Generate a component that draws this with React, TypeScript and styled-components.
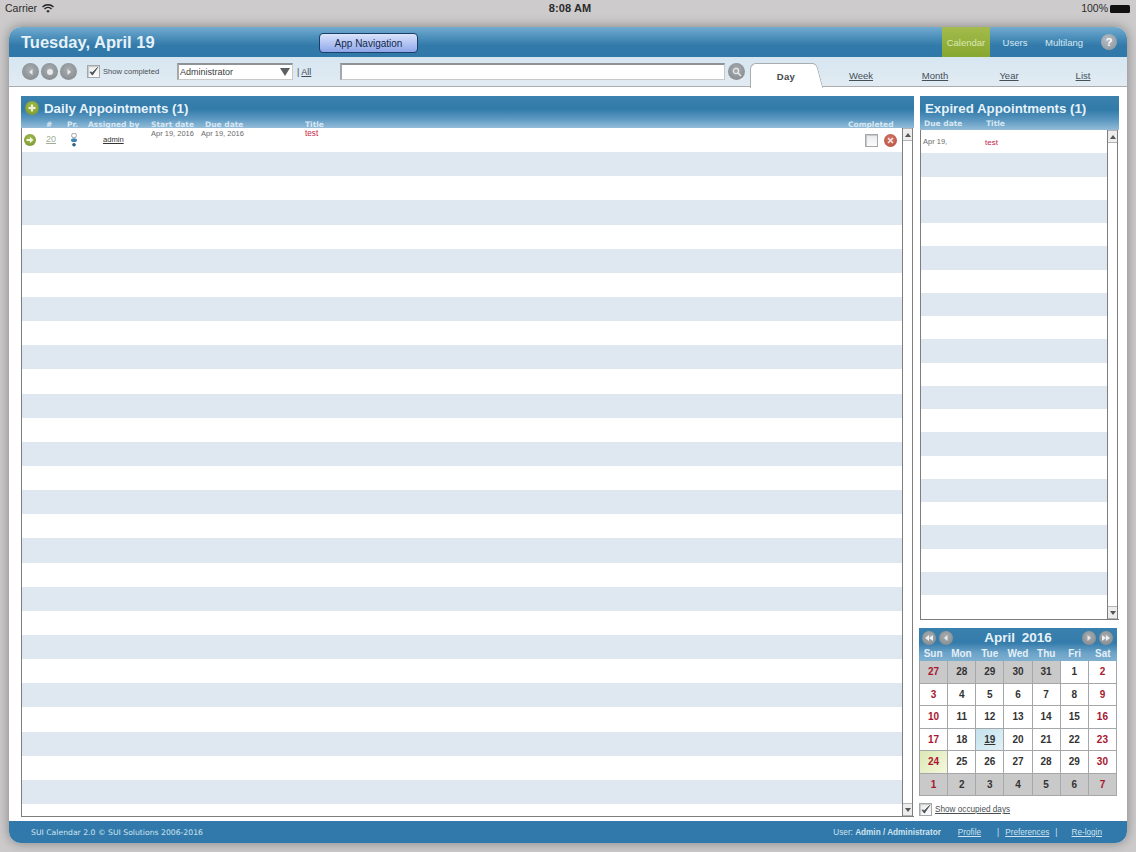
import React from "react";
import styled, { createGlobalStyle } from "styled-components";

const GlobalStyle = createGlobalStyle`
  html, body {
    margin: 0;
    padding: 0;
    background-color: #cdcbcb;
    font-family: "Liberation Sans", Arial, sans-serif;
  }
`;

const Page = styled.div`
  width: 1136px;
  height: 852px;
  overflow: hidden;
  display: flex;
  flex-direction: column;
  background-color: #cdcbcb;
`;

const StatusBar = styled.div`
  height: 27px;
  flex: none;
  padding: 0 5px;
  display: grid;
  grid-template-columns: 1fr 1fr 1fr;
  align-items: start;
  font-size: 10.5px;
  line-height: 17px;
  color: #2a2a2a;
`;

const StatusLeft = styled.div`
  display: flex;
  align-items: center;
  gap: 5px;
`;

const StatusTime = styled.div`
  text-align: center;
  font-size: 11px;
  font-weight: bold;
  letter-spacing: 0.1px;
  padding-left: 4px;
`;

const StatusRight = styled.div`
  display: flex;
  justify-content: flex-end;
  align-items: center;
  gap: 2px;
`;

const Battery = styled.div`
  width: 20px;
  height: 8px;
  background-color: #111;
  border-radius: 1.5px;
  margin-right: 1px;
`;

const AppWindow = styled.div`
  width: 1118px;
  height: 816px;
  margin-left: 9px;
  flex: none;
  display: flex;
  flex-direction: column;
  border-radius: 12px;
  background-color: #fff;
  overflow: hidden;
  box-shadow: 0 0 12px rgba(70, 70, 70, 0.55);
`;

const Header = styled.div`
  height: 30px;
  flex: none;
  display: flex;
  align-items: stretch;
  background: linear-gradient(#72abd0 0%, #4c8fbb 35%, #327aaa 62%, #2f78a9 100%);
`;

const DateTitle = styled.div`
  width: 298px;
  flex: none;
  box-sizing: border-box;
  padding-left: 12px;
  font-size: 16.5px;
  font-weight: bold;
  line-height: 31px;
  color: #e6f2f9;
`;

const NavButton = styled.button`
  width: 99px;
  height: 20px;
  margin: 6px 0 0 12px;
  padding: 0;
  border: 1px solid #1b3f66;
  border-radius: 4px;
  background: linear-gradient(#dbe3fb, #8ea6ea);
  font-family: inherit;
  font-size: 10px;
  color: #122a4a;
`;

const TopNav = styled.div`
  margin-left: auto;
  display: flex;
  align-items: stretch;
`;

const TopNavItem = styled.div<{ $active?: boolean; $width: number }>`
  width: ${(p) => p.$width}px;
  text-align: center;
  font-size: 9.5px;
  line-height: 32px;
  color: ${(p) => (p.$active ? "#dbe9b4" : "#d7e8f3")};
  background: ${(p) => (p.$active ? "linear-gradient(#a3bb4c, #87a72f)" : "none")};
`;

const HelpButton = styled.div`
  width: 16px;
  height: 16px;
  margin: 7px 10px 0 13px;
  border-radius: 50%;
  background: radial-gradient(circle at 40% 35%, #b5bdc4, #87929b);
  color: #fff;
  font-size: 11px;
  font-weight: bold;
  line-height: 16px;
  text-align: center;
`;

const Toolbar = styled.div`
  height: 30px;
  flex: none;
  display: flex;
  align-items: flex-start;
  background: linear-gradient(#d6e6f1, #e2ebf2);
  border-bottom: 1px solid #a9adb0;
  box-sizing: border-box;
`;

const ToolGroup = styled.div<{ $pad?: number; $gap?: number; $width?: number }>`
  display: flex;
  align-items: center;
  height: 29px;
  padding-left: ${(p) => p.$pad ?? 0}px;
  gap: ${(p) => p.$gap ?? 0}px;
  ${(p) => (p.$width ? `width: ${p.$width}px;` : "")}
`;

const RoundButton = styled.div<{ $size?: number; $tone?: string }>`
  width: ${(p) => p.$size ?? 17}px;
  height: ${(p) => p.$size ?? 17}px;
  flex: none;
  border-radius: 50%;
  background: ${(p) => p.$tone ?? "radial-gradient(circle at 50% 40%, #a9aeb2, #7e8488)"};
  display: flex;
  align-items: center;
  justify-content: center;
`;

const CheckFrame = styled.div<{ $size?: number }>`
  width: ${(p) => p.$size ?? 13}px;
  height: ${(p) => p.$size ?? 13}px;
  flex: none;
  box-sizing: border-box;
  border: 1px solid #a4a8ab;
  box-shadow: inset 1px 1px 1px #c4c6c8;
  background: linear-gradient(#ececec, #fbfbfb);
  display: flex;
  align-items: center;
  justify-content: center;
`;

const ToolLabel = styled.span`
  margin-left: 3px;
  font-size: 7.6px;
  color: #4a4f53;
  white-space: nowrap;
`;

const TextField = styled.div<{ $width: number }>`
  width: ${(p) => p.$width}px;
  height: 17px;
  flex: none;
  box-sizing: border-box;
  border: 1px solid #c8c8c8;
  border-top: 2px solid #8f9396;
  border-left: 2px solid #a5a8aa;
  background-color: #fff;
  display: flex;
  align-items: center;
  justify-content: space-between;
  padding: 0 2px 0 1px;
  font-size: 9px;
  color: #3c3c3c;
`;

const Caret = styled.div`
  width: 0;
  height: 0;
  border-left: 5px solid transparent;
  border-right: 5px solid transparent;
  border-top: 8px solid #5c6063;
`;

const AllLink = styled.span`
  margin-left: 4px;
  width: 43px;
  flex: none;
  font-size: 9px;
  color: #3f4c56;
  & > u {
    margin-left: 2px;
  }
`;

const Tabs = styled.div`
  margin-left: auto;
  width: 377px;
  height: 30px;
  flex: none;
  display: flex;
  align-items: flex-end;
`;

const ActiveTab = styled.div`
  width: 66px;
  height: 25px;
  flex: none;
  margin-right: 8px;
  box-sizing: border-box;
  background-color: #fff;
  border: 1px solid #a9adb0;
  border-right: none;
  border-bottom: none;
  border-radius: 6px 4px 0 0;
  position: relative;
  font-size: 9.5px;
  font-weight: bold;
  line-height: 25px;
  text-align: center;
  letter-spacing: 0.4px;
  padding-left: 5px;
  color: #44484b;
  margin-bottom: -1px;

  &::after {
    content: "";
    position: absolute;
    top: -1px;
    right: -4px;
    width: 7px;
    height: 25px;
    background-color: #fff;
    border-right: 1px solid #a9adb0;
    border-top: 1px solid #a9adb0;
    border-radius: 0 5px 0 0;
    box-sizing: border-box;
    transform: skewX(15deg);
  }
`;

const TabLink = styled.div`
  width: 74px;
  flex: none;
  font-size: 9.5px;
  line-height: 22px;
  text-align: center;
  text-decoration: underline;
  color: #44505a;
`;

const Body = styled.div`
  flex: 1;
  min-height: 0;
  display: flex;
  gap: 6px;
  padding: 9px 8px 4px 12px;
`;

const DailyPanel = styled.section`
  width: 893px;
  flex: none;
  display: flex;
  flex-direction: column;
`;

const SideColumn = styled.div`
  width: 199px;
  flex: none;
  display: flex;
  flex-direction: column;
`;

const PanelHeader = styled.div<{ $height: number }>`
  height: ${(p) => p.$height}px;
  flex: none;
  box-sizing: border-box;
  padding-top: 3px;
  background: linear-gradient(#3d82af 0%, #317aa9 40%, #5a97c0 70%, #93bcd8 100%);
`;

const PanelTitle = styled.div<{ $indent: number }>`
  display: flex;
  align-items: center;
  gap: 5px;
  height: 18px;
  padding-left: ${(p) => p.$indent}px;
  font-size: 13.3px;
  font-weight: bold;
  color: #e6f2f9;
  white-space: nowrap;
`;

const headColumns = "24px 22px 21px 63px 50px 104px 543px 54px";
const rowColumns = "23px 22px 21px 63px 50px 104px 543px 54px";

const DailyHeadRow = styled.div`
  display: grid;
  grid-template-columns: ${headColumns};
  margin-top: 3px;
`;

const HeadCell = styled.div<{ $indent?: number }>`
  padding-left: ${(p) => p.$indent ?? 0}px;
  font-family: "DejaVu Sans", Verdana, sans-serif;
  font-size: 7.5px;
  font-weight: bold;
  line-height: 9px;
  color: #d8e8f3;
  white-space: nowrap;
`;

const ListFrame = styled.div`
  flex: 1;
  min-height: 0;
  display: flex;
  box-sizing: border-box;
  border-left: 1px solid #7d7d7d;
  border-bottom: 1px solid #7d7d7d;
`;

const RowList = styled.div<{ $rowHeight: number }>`
  flex: 1;
  min-width: 0;
  overflow: hidden;
  display: grid;
  grid-auto-rows: ${(p) => p.$rowHeight}px;
`;

const Row = styled.div<{ $alt: boolean; $columns?: string }>`
  background-color: ${(p) => (p.$alt ? "#dfe8f0" : "#fff")};
  display: grid;
  grid-template-columns: ${(p) => p.$columns ?? "none"};
  align-items: center;
  font-size: 7.5px;
  color: #5a5a5a;
`;

const CellIcon = styled.div<{ $indent: number }>`
  padding-left: ${(p) => p.$indent}px;
  display: flex;
  align-items: center;
`;

const NumberCell = styled.div`
  padding: 0 0 2px 1px;
  font-size: 9px;
  text-decoration: underline;
  color: #a3ae98;
`;

const AdminCell = styled.div`
  padding: 0 0 2px 15px;
  font-size: 7.6px;
  text-decoration: underline;
  color: #333;
`;

const DateCell = styled.div`
  align-self: start;
  padding-top: 1px;
  font-size: 7.5px;
  color: #6a6a6a;
  white-space: nowrap;
`;

const TitleCell = styled.div`
  align-self: start;
  padding-top: 1px;
  font-size: 8.2px;
  color: #c8243f;
`;

const RowActions = styled.div`
  display: flex;
  align-items: center;
  gap: 6px;
  padding: 1px 0 0 17px;
`;

const ScrollTrack = styled.div`
  width: 11px;
  flex: none;
  margin-right: 1px;
  display: flex;
  flex-direction: column;
  justify-content: space-between;
  box-sizing: border-box;
  border-left: 1px solid #7d7d7d;
  border-right: 1px solid #7d7d7d;
  background-color: #fff;
`;

const ScrollButton = styled.div`
  height: 11px;
  background-color: #ededed;
  border-top: 1px solid #b5b5b5;
  border-bottom: 1px solid #b5b5b5;
  display: flex;
  align-items: center;
  justify-content: center;
`;

const ScrollArrow = styled.div<{ $down?: boolean }>`
  width: 0;
  height: 0;
  border-left: 3px solid transparent;
  border-right: 3px solid transparent;
  ${(p) => (p.$down ? "border-top: 4px solid #555;" : "border-bottom: 4px solid #555;")}
`;

const ExpiredPanel = styled.section`
  height: 524px;
  flex: none;
  display: flex;
  flex-direction: column;
`;

const ExpiredHead = styled.div`
  display: grid;
  grid-template-columns: 62px 1fr;
  padding-left: 4px;
  margin-top: 2px;
`;

const ExpiredDate = styled.div`
  padding: 7px 0 0 2px;
  font-size: 7.5px;
  color: #6a6a6a;
  align-self: start;
`;

const ExpiredTitle = styled.div`
  padding-top: 8px;
  font-size: 8px;
  color: #c8243f;
  align-self: start;
`;

const CalendarBox = styled.section`
  margin: 8px 0 0 -1px;
  width: 199px;
  flex: none;
`;

const CalendarHeader = styled.div`
  height: 33px;
  width: 198px;
  box-sizing: border-box;
  background: linear-gradient(#3a80ae 0%, #347cab 45%, #6ba2c8 75%, #7fb0d0 100%);
`;

const MonthRow = styled.div`
  height: 19px;
  display: flex;
  align-items: center;
  padding: 0 4px 0 3px;
  gap: 3px;
`;

const MonthName = styled.div`
  flex: 1;
  text-align: center;
  font-size: 13.5px;
  font-weight: bold;
  word-spacing: 3px;
  color: #e6f2f9;
  padding-left: 1px;
`;

const WeekDays = styled.div`
  display: grid;
  grid-template-columns: repeat(7, 1fr);
`;

const WeekDay = styled.div`
  font-size: 10px;
  font-weight: bold;
  line-height: 13px;
  text-align: center;
  color: #e3eff7;
`;

const DayGrid = styled.div`
  width: 198px;
  box-sizing: border-box;
  display: grid;
  grid-template-columns: repeat(7, 1fr);
  grid-auto-rows: 22.5px;
  border-left: 1px solid #9fa3a5;
`;

const DayCell = styled.div<{ $bg: string; $weekend: boolean }>`
  box-sizing: border-box;
  border-right: 1px solid #a5a8aa;
  border-bottom: 1px solid #a5a8aa;
  background: ${(p) => p.$bg};
  display: flex;
  align-items: center;
  justify-content: center;
  font-size: 10px;
  font-weight: bold;
  color: ${(p) => (p.$weekend ? "#a8162f" : "#333")};
`;

const OccupiedRow = styled.div`
  display: flex;
  align-items: center;
  gap: 3px;
  margin-top: 7px;
  font-size: 8.2px;
  text-decoration: underline;
  color: #4a4f53;
`;

const Footer = styled.footer`
  height: 22px;
  flex: none;
  display: flex;
  align-items: center;
  background-color: #3079aa;
  font-family: "DejaVu Sans", Verdana, sans-serif;
  color: #cfe3f0;
`;

const Copyright = styled.div`
  padding-left: 22px;
  font-size: 7.7px;
`;

const FooterLinks = styled.div`
  margin-left: auto;
  display: flex;
  align-items: center;
  padding-right: 25px;
  font-family: "Liberation Sans", Arial, sans-serif;
  font-size: 8.2px;
`;

const FooterLink = styled.span<{ $left: number }>`
  margin-left: ${(p) => p.$left}px;
  text-decoration: underline;
`;

const FooterPipe = styled.span<{ $left: number }>`
  margin-left: ${(p) => p.$left}px;
`;

const Arrow = ({ dir, size = 8 }: { dir: "left" | "right"; size?: number }) => (
  <svg width={size} height={size} viewBox="0 0 8 8">
    <path d={dir === "left" ? "M5.5 1 L2 4 L5.5 7 Z" : "M2.5 1 L6 4 L2.5 7 Z"} fill="#e8eaec" />
  </svg>
);

const DoubleArrow = ({ dir }: { dir: "left" | "right" }) => (
  <svg width="10" height="8" viewBox="0 0 10 8">
    <path
      d={dir === "left" ? "M5 1 L1 4 L5 7 Z M9 1 L5 4 L9 7 Z" : "M1 1 L5 4 L1 7 Z M5 1 L9 4 L5 7 Z"}
      fill="#eef0f2"
    />
  </svg>
);

const CheckMark = ({ size = 11 }: { size?: number }) => (
  <svg width={size} height={size} viewBox="0 0 12 12">
    <path d="M2 6.5 L4.8 10 L10.5 1.5 L5 7 Z" fill="#4a5056" stroke="#4a5056" strokeWidth="0.8" />
  </svg>
);

const Wifi = () => (
  <svg width="12" height="9" viewBox="0 0 12 9">
    <path d="M0.5 3 A8 8 0 0 1 11.5 3" fill="none" stroke="#222" strokeWidth="1.4" />
    <path d="M2.5 5 A5 5 0 0 1 9.5 5" fill="none" stroke="#222" strokeWidth="1.4" />
    <path d="M4.2 7 A2.6 2.6 0 0 1 7.8 7 L6 8.8 Z" fill="#222" />
  </svg>
);

const GREEN_BALL = "radial-gradient(circle at 50% 40%, #a9c24f, #6f8c2a)";

const PlusBall = () => (
  <RoundButton $size={14} $tone={GREEN_BALL}>
    <svg width="8" height="8" viewBox="0 0 8 8">
      <path d="M3 0.5 H5 V3 H7.5 V5 H5 V7.5 H3 V5 H0.5 V3 H3 Z" fill="#eef3d8" />
    </svg>
  </RoundButton>
);

const GoBall = () => (
  <RoundButton $size={12} $tone={GREEN_BALL}>
    <svg width="8" height="8" viewBox="0 0 8 8">
      <path d="M0.5 3 H4 V1 L7.5 4 L4 7 V5 H0.5 Z" fill="#f2f5e2" />
    </svg>
  </RoundButton>
);

const DeleteBall = () => (
  <RoundButton $size={13} $tone="radial-gradient(circle at 50% 40%, #d9796a, #b04a3c)">
    <svg width="7" height="7" viewBox="0 0 7 7">
      <path d="M1 1 L6 6 M6 1 L1 6" stroke="#f4e6e2" strokeWidth="1.6" />
    </svg>
  </RoundButton>
);

const PriorityIcon = () => (
  <svg width="8" height="14" viewBox="0 0 8 14">
    <circle cx="4" cy="2.5" r="2.4" fill="none" stroke="#9aa0a4" strokeWidth="1" />
    <ellipse cx="4" cy="7.2" rx="3" ry="1.9" fill="#3f86b4" />
    <circle cx="4" cy="11.8" r="1.8" fill="#2c5f80" />
  </svg>
);

const Scrollbar = () => (
  <ScrollTrack>
    <ScrollButton>
      <ScrollArrow />
    </ScrollButton>
    <ScrollButton>
      <ScrollArrow $down />
    </ScrollButton>
  </ScrollTrack>
);

const dailyRows = Array.from({ length: 29 }, (_, i) => i);
const expiredRows = Array.from({ length: 21 }, (_, i) => i);

const weekDays = ["Sun", "Mon", "Tue", "Wed", "Thu", "Fri", "Sat"];
const calendarDays = [
  27, 28, 29, 30, 31, 1, 2, 3, 4, 5, 6, 7, 8, 9, 10, 11, 12, 13, 14, 15, 16, 17, 18, 19, 20, 21,
  22, 23, 24, 25, 26, 27, 28, 29, 30, 1, 2, 3, 4, 5, 6, 7,
];

const dayBackground = (index: number) => {
  if (index < 5 || index >= 35) return "#c9c9c9";
  if (index === 23) return "linear-gradient(135deg, #c4e2ee, #e2f1f6)";
  if (index === 28) return "linear-gradient(135deg, #dbe8b4, #f6f8dc)";
  return "#fff";
};

const App: React.FC = () => {
  return (
    <Page>
      <GlobalStyle />
      <StatusBar>
        <StatusLeft>
          Carrier <Wifi />
        </StatusLeft>
        <StatusTime>8:08 AM</StatusTime>
        <StatusRight>
          100% <Battery />
        </StatusRight>
      </StatusBar>

      <AppWindow>
        <Header>
          <DateTitle>Tuesday, April 19</DateTitle>
          <NavButton>App Navigation</NavButton>
          <TopNav>
            <TopNavItem $active $width={48}>
              Calendar
            </TopNavItem>
            <TopNavItem $width={50}>Users</TopNavItem>
            <TopNavItem $width={48}>Multilang</TopNavItem>
            <HelpButton>?</HelpButton>
          </TopNav>
        </Header>

        <Toolbar>
          <ToolGroup $pad={13} $gap={2}>
            <RoundButton>
              <Arrow dir="left" />
            </RoundButton>
            <RoundButton>
              <svg width="6" height="6" viewBox="0 0 6 6">
                <circle cx="3" cy="3" r="3" fill="#e8eaec" />
              </svg>
            </RoundButton>
            <RoundButton>
              <Arrow dir="right" />
            </RoundButton>
          </ToolGroup>
          <ToolGroup $pad={10} $width={90}>
            <CheckFrame>
              <CheckMark />
            </CheckFrame>
            <ToolLabel>Show completed</ToolLabel>
          </ToolGroup>
          <ToolGroup>
            <TextField $width={116}>
              Administrator
              <Caret />
            </TextField>
            <AllLink>
              |<u>All</u>
            </AllLink>
          </ToolGroup>
          <ToolGroup $gap={3}>
            <TextField $width={385} />
            <RoundButton>
              <svg width="10" height="10" viewBox="0 0 10 10">
                <circle cx="4" cy="4" r="2.6" fill="none" stroke="#e8eaec" strokeWidth="1.3" />
                <path d="M6 6 L9 9" stroke="#e8eaec" strokeWidth="1.5" />
              </svg>
            </RoundButton>
          </ToolGroup>
          <Tabs>
            <ActiveTab>Day</ActiveTab>
            <TabLink>Week</TabLink>
            <TabLink>Month</TabLink>
            <TabLink>Year</TabLink>
            <TabLink>List</TabLink>
          </Tabs>
        </Toolbar>

        <Body>
          <DailyPanel>
            <PanelHeader $height={32}>
              <PanelTitle $indent={4}>
                <PlusBall />
                Daily Appointments (1)
              </PanelTitle>
              <DailyHeadRow>
                <HeadCell />
                <HeadCell $indent={1}>#</HeadCell>
                <HeadCell>Pr.</HeadCell>
                <HeadCell>Assigned by</HeadCell>
                <HeadCell>Start date</HeadCell>
                <HeadCell $indent={4}>Due date</HeadCell>
                <HeadCell>Title</HeadCell>
                <HeadCell>Completed</HeadCell>
              </DailyHeadRow>
            </PanelHeader>
            <ListFrame>
              <RowList $rowHeight={24.15}>
                {dailyRows.map((i) =>
                  i === 0 ? (
                    <Row key={i} $alt={false} $columns={rowColumns}>
                      <CellIcon $indent={2}>
                        <GoBall />
                      </CellIcon>
                      <NumberCell>20</NumberCell>
                      <CellIcon $indent={3}>
                        <PriorityIcon />
                      </CellIcon>
                      <AdminCell>admin</AdminCell>
                      <DateCell>Apr 19, 2016</DateCell>
                      <DateCell>Apr 19, 2016</DateCell>
                      <TitleCell>test</TitleCell>
                      <RowActions>
                        <CheckFrame />
                        <DeleteBall />
                      </RowActions>
                    </Row>
                  ) : (
                    <Row key={i} $alt={i % 2 === 1} />
                  ),
                )}
              </RowList>
              <Scrollbar />
            </ListFrame>
          </DailyPanel>

          <SideColumn>
            <ExpiredPanel>
              <PanelHeader $height={34}>
                <PanelTitle $indent={5}>Expired Appointments (1)</PanelTitle>
                <ExpiredHead>
                  <HeadCell>Due date</HeadCell>
                  <HeadCell>Title</HeadCell>
                </ExpiredHead>
              </PanelHeader>
              <ListFrame>
                <RowList $rowHeight={23.25}>
                  {expiredRows.map((i) =>
                    i === 0 ? (
                      <Row key={i} $alt={false} $columns="64px 1fr">
                        <ExpiredDate>Apr 19,</ExpiredDate>
                        <ExpiredTitle>test</ExpiredTitle>
                      </Row>
                    ) : (
                      <Row key={i} $alt={i % 2 === 1} />
                    ),
                  )}
                </RowList>
                <Scrollbar />
              </ListFrame>
            </ExpiredPanel>

            <CalendarBox>
              <CalendarHeader>
                <MonthRow>
                  <RoundButton $size={14}>
                    <DoubleArrow dir="left" />
                  </RoundButton>
                  <RoundButton $size={14}>
                    <Arrow dir="left" />
                  </RoundButton>
                  <MonthName>April 2016</MonthName>
                  <RoundButton $size={14}>
                    <Arrow dir="right" />
                  </RoundButton>
                  <RoundButton $size={14}>
                    <DoubleArrow dir="right" />
                  </RoundButton>
                </MonthRow>
                <WeekDays>
                  {weekDays.map((d) => (
                    <WeekDay key={d}>{d}</WeekDay>
                  ))}
                </WeekDays>
              </CalendarHeader>
              <DayGrid>
                {calendarDays.map((d, i) => (
                  <DayCell key={i} $bg={dayBackground(i)} $weekend={i % 7 === 0 || i % 7 === 6}>
                    {i === 23 ? <u>{d}</u> : d}
                  </DayCell>
                ))}
              </DayGrid>
              <OccupiedRow>
                <CheckFrame>
                  <CheckMark />
                </CheckFrame>
                Show occupied days
              </OccupiedRow>
            </CalendarBox>
          </SideColumn>
        </Body>

        <Footer>
          <Copyright>SUI Calendar 2.0 © SUI Solutions 2006-2016</Copyright>
          <FooterLinks>
            <span>
              User: <b>Admin / Administrator</b>
            </span>
            <FooterLink $left={17}>Profile</FooterLink>
            <FooterPipe $left={16}>|</FooterPipe>
            <FooterLink $left={6}>Preferences</FooterLink>
            <FooterPipe $left={6}>|</FooterPipe>
            <FooterLink $left={14}>Re-login</FooterLink>
          </FooterLinks>
        </Footer>
      </AppWindow>
    </Page>
  );
};

export default App;
